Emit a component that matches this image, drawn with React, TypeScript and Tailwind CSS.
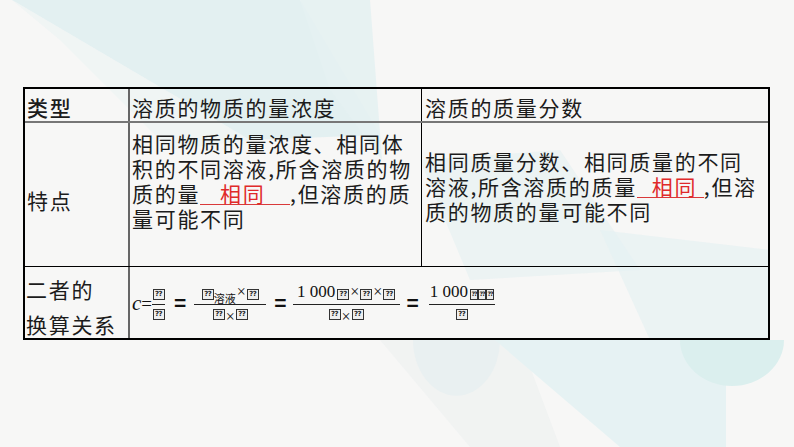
import React from "react";

// ── Pieces of the formula row ─────────────────────────────────────────────────

function Tofu({ narrow = false }: { narrow?: boolean }) {
  return (
    <span
      className={
        narrow
          ? "inline-flex h-[11px] w-[8px] items-center justify-center border border-[#333] bg-[#eee] font-['DejaVu_Sans',sans-serif] text-[6px] font-bold leading-none tracking-[-1px] text-[#222]"
          : "inline-flex h-[11px] w-[12px] items-center justify-center border border-[#333] bg-[#eee] font-['DejaVu_Sans',sans-serif] text-[7px] font-bold leading-none tracking-[-0.5px] text-[#222]"
      }
    >
      ??
    </span>
  );
}

function Times() {
  return <span className="mx-[1px] text-[16px] leading-none">×</span>;
}

function Frac({ num, den, width }: { num: React.ReactNode; den: React.ReactNode; width: string }) {
  return (
    <span className={`inline-flex flex-col items-center ${width}`}>
      <span className="flex h-[19px] items-end pb-[4px]">{num}</span>
      <span className="h-0 w-full border-t-[1.5px] border-[#222]" />
      <span className="flex h-[18px] items-start pt-[4px]">{den}</span>
    </span>
  );
}

function Eq() {
  return (
    <span className="font-['Liberation_Sans',sans-serif] text-[21px] font-bold leading-none">=</span>
  );
}

function Blank({ children, width }: { children: React.ReactNode; width: string }) {
  return (
    <span
      className={`inline-block ${width} border-b border-[#d93a3a] text-[#e02a2a] leading-[21px]`}
    >
      {children}
    </span>
  );
}

// ── Background drawing ────────────────────────────────────────────────────────

function Backdrop() {
  return (
    <svg className="absolute inset-0" width="794" height="447" viewBox="0 0 794 447">
      <rect width="794" height="447" fill="#f7f7f6" />
      <polygon points="12,0 300,0 380,135 250,140" fill="#dcedef" opacity="0.75" />
      <polygon points="300,0 370,0 382,160 330,90" fill="#e4f1f2" opacity="0.9" />
      <polygon points="12,0 250,140 170,150 60,40" fill="#eef4f4" opacity="0.8" />
      <polygon points="420,160 560,150 640,270 470,280" fill="#e4f0f1" opacity="0.6" />
      <polygon points="380,340 520,340 560,447 470,447" fill="#f0f2f2" opacity="0.9" />
      <path d="M413,340 A43,55 0 0 0 500,340 Z" fill="#e9f0f1" />
      <polygon points="495,340 726,340 726,447 620,447" fill="#e6f2f3" />
      <polygon points="600,230 770,250 770,340 650,340" fill="#e6f1f2" opacity="0.7" />
      <path d="M680,340 A52,46 0 0 0 784,340 Z" fill="#dbefee" />
    </svg>
  );
}

// ── Main ──────────────────────────────────────────────────────────────────────

export default function App() {
  return (
    <div className="relative h-[447px] w-[794px] overflow-hidden">
      <Backdrop />

      <div className="relative pl-[23px] pt-[87px] font-['Noto_Sans_CJK_SC',sans-serif] text-[21px] tracking-[1.7px] text-[#1c1c1c]">
        <div className="w-[747px] border-2 border-black">
          {/* header */}
          <div className="flex h-[34px] border-b-2 border-[#777]">
            <div className="w-[105px] border-r-2 border-[#666] pl-[2px] pt-[6px] leading-[25px] font-medium">类型</div>
            <div className="w-[292px] border-r border-black pl-[2px] pt-[6px] leading-[25px]">溶质的物质的量浓度</div>
            <div className="flex-1 pl-[3px] pt-[6px] leading-[25px]">溶质的质量分数</div>
          </div>

          {/* 特点 */}
          <div className="flex h-[144px] border-b border-black">
            <div className="w-[105px] border-r-2 border-[#666] pl-[2px] pt-[65px] leading-[25px]">特点</div>
            <div className="w-[292px] border-r border-black pl-[2px] pt-[8px] leading-[25px]">
              <div>相同物质的量浓度、相同体</div>
              <div>积的不同溶液,所含溶质的物</div>
              <div>
                质的量<Blank width="w-[90px] pl-[20px]">相同</Blank>,但溶质的质
              </div>
              <div>量可能不同</div>
            </div>
            <div className="flex-1 pl-[3px] pt-[26px] leading-[25px]">
              <div>相同质量分数、相同质量的不同</div>
              <div>
                溶液,所含溶质的质量<Blank width="w-[67px] pl-[15px]">相同</Blank>,但溶
              </div>
              <div>质的物质的量可能不同</div>
            </div>
          </div>

          {/* 二者的换算关系 */}
          <div className="flex h-[71px]">
            <div className="w-[105px] border-r-2 border-[#666] pl-[1px] pt-[5px] leading-[35px]">
              <div>二者的</div>
              <div>换算关系</div>
            </div>
            <div className="flex flex-1 items-center pl-[2px] pt-[2px] font-['Liberation_Serif',serif] tracking-normal text-[#111]">
              <span className="text-[21px] italic leading-none">c</span>
              <span className="text-[19px] leading-none">=</span>
              <Frac width="w-[13px]" num={<Tofu />} den={<Tofu />} />
              <span className="ml-[9px] mr-[8px]">
                <Eq />
              </span>
              <Frac
                width="w-[72px]"
                num={
                  <>
                    <Tofu />
                    <span className="relative top-[4px] font-['Noto_Sans_CJK_SC',sans-serif] text-[11px] leading-none">溶液</span>
                    <Times />
                    <Tofu />
                  </>
                }
                den={
                  <>
                    <Tofu />
                    <Times />
                    <Tofu />
                  </>
                }
              />
              <span className="ml-[8px] mr-[6px]">
                <Eq />
              </span>
              <Frac
                width="w-[107px]"
                num={
                  <>
                    <span className="mr-[2px] text-[17px] leading-none">1 000</span>
                    <Tofu />
                    <Times />
                    <Tofu />
                    <Times />
                    <Tofu />
                  </>
                }
                den={
                  <>
                    <Tofu />
                    <Times />
                    <Tofu />
                  </>
                }
              />
              <span className="ml-[7px] mr-[10px]">
                <Eq />
              </span>
              <Frac
                width="w-[66px]"
                num={
                  <>
                    <span className="mr-[2px] text-[17px] leading-none">1 000</span>
                    <Tofu narrow />
                    <Tofu narrow />
                    <Tofu narrow />
                  </>
                }
                den={<Tofu />}
              />
            </div>
          </div>
        </div>
      </div>
    </div>
  );
}
